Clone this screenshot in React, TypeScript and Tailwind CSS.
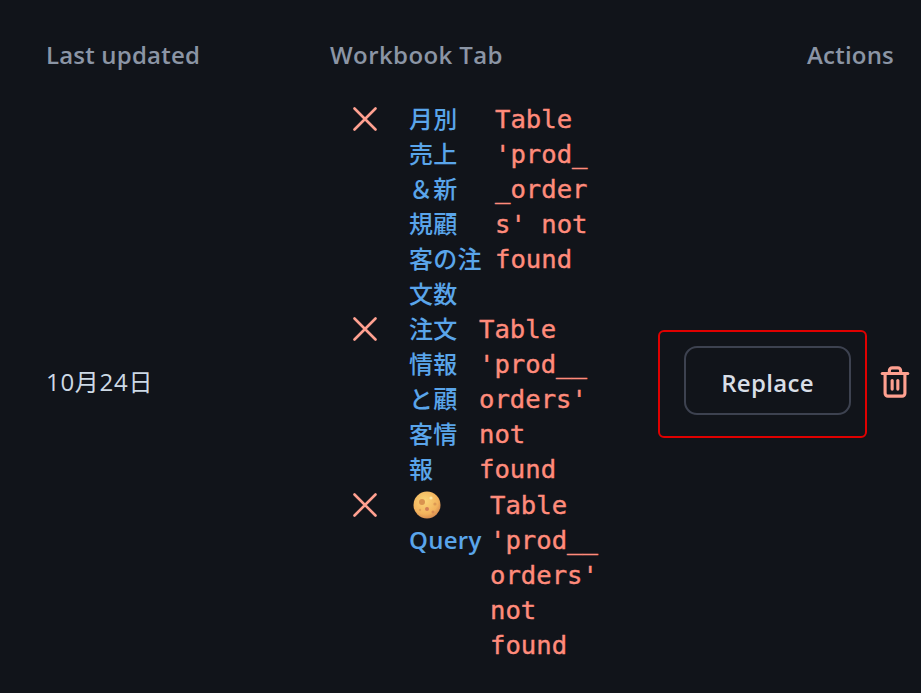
import React from 'react';
import { Trash2 } from 'lucide-react';

const sans = 'font-["Open_Sans","Noto_Sans_CJK_JP",sans-serif]';

interface TabRow {
  name: string[];
  error: string;
  nameWidth: string;
  errorWidth: string;
  moon?: boolean;
}

const rows: TabRow[] = [
  {
    name: ['月別', '売上', '＆新', '規顧', '客の注', '文数'],
    error: "Table 'prod__orders' not found",
    nameWidth: 'w-[86px] font-medium',
    errorWidth: 'w-[94px]',
  },
  {
    name: ['注文', '情報', 'と顧', '客情', '報'],
    error: "Table 'prod__orders' not found",
    nameWidth: 'w-[70px] font-medium',
    errorWidth: 'w-[110px]',
  },
  {
    name: ['Query'],
    error: "Table 'prod__orders' not found",
    nameWidth: 'w-[81px] font-semibold',
    errorWidth: 'w-[110px]',
    moon: true,
  },
];

const Moon = () => (
  <svg viewBox="0 0 28 28" className="ml-[4px] mt-[4px] mb-[3px] h-[28px] w-[28px]">
    <defs>
      <radialGradient id="moon" cx="0.42" cy="0.35" r="0.75">
        <stop offset="0" stopColor="#fbd678" />
        <stop offset="0.65" stopColor="#f2b25c" />
        <stop offset="1" stopColor="#c9794a" />
      </radialGradient>
    </defs>
    <circle cx="14" cy="14" r="13.5" fill="url(#moon)" />
    <circle cx="9" cy="11" r="3" fill="#d9934f" />
    <circle cx="18" cy="7" r="1.6" fill="#fce6a3" />
    <circle cx="14" cy="18" r="2" fill="#d27f56" />
    <circle cx="22" cy="13" r="1.6" fill="#dd9a55" />
    <circle cx="7" cy="19" r="1.2" fill="#e0a05a" />
    <circle cx="20" cy="21" r="1.5" fill="#d88c52" />
  </svg>
);

const Cross = () => (
  <svg viewBox="0 0 24 24" fill="none" className="ml-[23px] mt-[5px] h-[24px] w-[24px] shrink-0">
    <path d="M1.5 1.5L22.5 22.5M22.5 1.5L1.5 22.5" stroke="#ffa090" strokeWidth="2.6" strokeLinecap="round" />
  </svg>
);

export default function App() {
  return (
    <div className={`${sans} h-[693px] w-[921px] overflow-hidden bg-[#11141a]`}>
      {/* header */}
      <div className="flex h-[102px] pt-[37px] text-[24px] leading-[36px] font-semibold tracking-[0.2px] text-[#8b95a5]">
        <div className="w-[330px] pl-[46px]">Last updated</div>
        <div className="flex-1 tracking-[0.4px]">Workbook Tab</div>
        <div className="pr-[27px]">Actions</div>
      </div>

      {/* single row */}
      <div className="flex items-center">
        <div className="w-[330px] pl-[46px] text-[24px] leading-[36px] tracking-[0.7px] text-[#cdd9e5]">10月24日</div>

        <div className="-mb-[2px] flex w-[328px] flex-col">
          {rows.map((row, i) => (
            <div key={i} className="flex pb-[1px]">
              <Cross />
              <div className={`${row.nameWidth} ml-[32px] -mt-[1px] shrink-0 text-[24px] leading-[35px] tracking-[0.3px] text-[#5aa5ea]`}>
                {row.moon && <Moon />}
                {row.name.map((line) => (
                  <div key={line}>{line}</div>
                ))}
              </div>
              <div className={`${row.errorWidth} break-words font-["DejaVu_Sans_Mono",monospace] text-[25.6px] leading-[35px] text-[#ff8b7b] [-webkit-text-stroke:0.4px_#ff8b7b]`}>
                {row.error}
              </div>
            </div>
          ))}
        </div>

        <div className="mt-[4px] flex h-[108px] w-[209px] items-start rounded-[6px] border-2 border-[#e00000] pl-[24px] pt-[14px]">
          <button className="h-[69px] w-[167px] rounded-[13px] border-2 border-[#3d4250] pt-[5px] text-[24px] font-semibold tracking-[0.3px] text-[#d8dee6]">
            Replace
          </button>
        </div>
        <Trash2 size={34} strokeWidth={2.2} className="ml-[11px] text-[#ffa090]" />
      </div>
    </div>
  );
}
